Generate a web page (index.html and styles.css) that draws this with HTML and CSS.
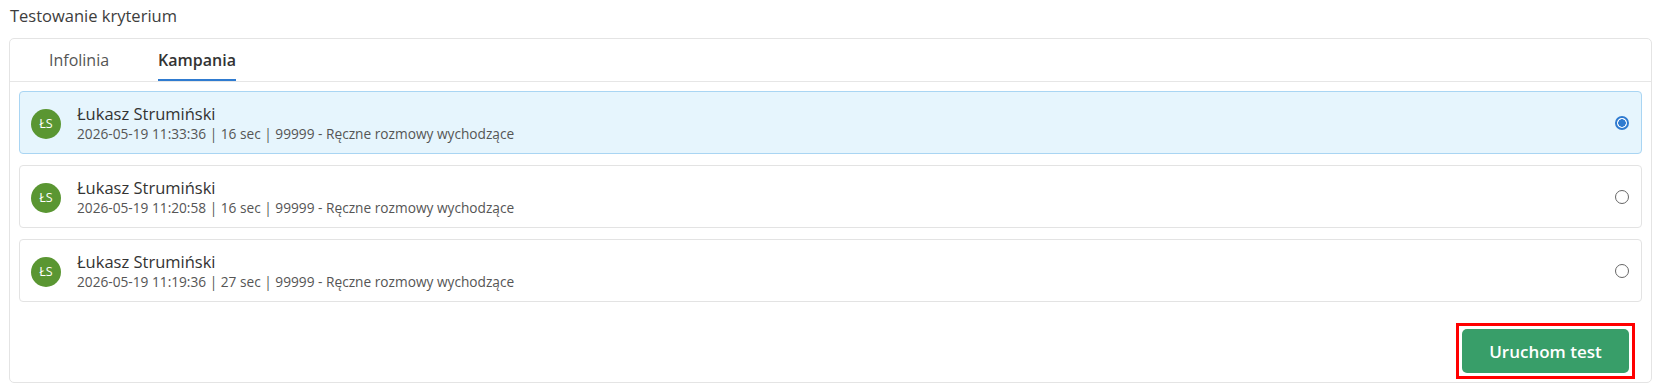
FILE: index.html
```html
<!DOCTYPE html>
<html lang="pl">
<head>
<meta charset="utf-8">
<title>Testowanie kryterium</title>
<link rel="stylesheet" href="styles.css">
</head>
<body>
<div class="page">
  <h2 class="title">Testowanie kryterium</h2>
  <section class="card">
    <nav class="tabs">
      <a class="tab">Infolinia</a>
      <a class="tab active">Kampania</a>
    </nav>
    <div class="list">
      <label class="item selected">
        <span class="avatar">ŁS</span>
        <span class="info">
          <span class="name">Łukasz Strumiński</span>
          <span class="meta">2026-05-19 11:33:36 | 16 sec | 99999 - Ręczne rozmowy wychodzące</span>
        </span>
        <span class="radio checked"></span>
      </label>
      <label class="item">
        <span class="avatar">ŁS</span>
        <span class="info">
          <span class="name">Łukasz Strumiński</span>
          <span class="meta">2026-05-19 11:20:58 | 16 sec | 99999 - Ręczne rozmowy wychodzące</span>
        </span>
        <span class="radio"></span>
      </label>
      <label class="item">
        <span class="avatar">ŁS</span>
        <span class="info">
          <span class="name">Łukasz Strumiński</span>
          <span class="meta">2026-05-19 11:19:36 | 27 sec | 99999 - Ręczne rozmowy wychodzące</span>
        </span>
        <span class="radio"></span>
      </label>
    </div>
    <div class="footer">
      <span class="highlight">
        <button class="run">Uruchom test</button>
      </span>
    </div>
  </section>
</div>
</body>
</html>
```

FILE: styles.css
```css
* { box-sizing: border-box; }
html, body { margin: 0; padding: 0; background: #fff; }
body {
  font-family: "Open Sans", "Noto Sans", sans-serif;
  color: #333;
}
.page {
  padding: 5px 9px 8px 9px;
}
.title {
  margin: 0 0 11px 1px;
  font-size: 16.5px;
  font-weight: 400;
  line-height: 22px;
  color: #3d3d3d;
}
.card {
  border: 1px solid #e4e4e4;
  border-radius: 5px;
  background: #fff;
}
.tabs {
  display: flex;
  gap: 49px;
  padding: 0 39px;
  height: 43px;
  border-bottom: 1px solid #e6e6e6;
}
.tab {
  display: flex;
  align-items: center;
  font-size: 16px;
  color: #555;
  border-bottom: 2px solid transparent;
  padding-top: 2px;
}
.tab.active {
  color: #333;
  font-weight: 600;
  border-bottom-color: #2f7bd0;
}
.list {
  display: flex;
  flex-direction: column;
  gap: 11px;
  padding: 9px 9px 0 9px;
}
.item {
  display: flex;
  align-items: center;
  gap: 16px;
  height: 63px;
  padding: 0 11px;
  border: 1px solid #e3e3e3;
  border-radius: 4px;
  background: #fff;
}
.item.selected {
  background: #e6f5fd;
  border-color: #a9d5f3;
}
.avatar {
  flex: none;
  width: 30px;
  height: 30px;
  border-radius: 50%;
  background: #5a9632;
  color: #fff;
  font-size: 12.5px;
  display: flex;
  align-items: center;
  justify-content: center;
  margin-top: 2px;
}
.info {
  flex: 1;
  display: flex;
  flex-direction: column;
}
.name {
  font-size: 16.5px;
  line-height: 21px;
  color: #333;
}
.meta {
  font-size: 13.7px;
  line-height: 19px;
  color: #555;
}
.radio {
  flex: none;
  width: 14px;
  height: 14px;
  border-radius: 50%;
  border: 1px solid #666;
  background: #fff;
  margin-right: 1px;
}
.radio.checked {
  border: 2px solid #2f7bd0;
  background: radial-gradient(circle, #2f7bd0 0 3.5px, #fff 4px);
}
.footer {
  display: flex;
  justify-content: flex-end;
  padding: 21px 16px 3px 0;
}
.highlight {
  display: flex;
  border: 3px solid #f00;
  padding: 3px;
}
.run {
  width: 167px;
  height: 44px;
  border: none;
  border-radius: 5px;
  background: #389e69;
  color: #fff;
  font-family: "Open Sans", "Noto Sans", sans-serif;
  font-size: 17px;
  font-weight: 600;
}
```
